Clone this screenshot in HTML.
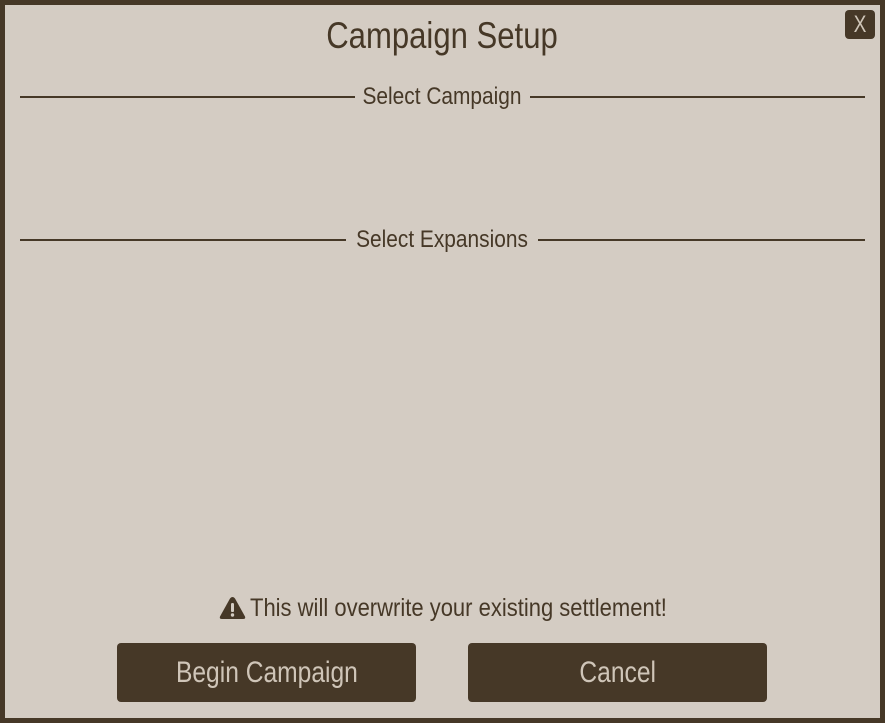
<!DOCTYPE html>
<html><head><style>
body{margin:0;width:885px;height:723px;overflow:hidden;background:#463827;font-family:"Liberation Sans",sans-serif;}
.p{position:absolute;left:5px;top:5px;width:875px;height:713px;background:#d4ccc3;}
.t{position:absolute;white-space:nowrap;color:#463827;transform-origin:center;}
.ln{position:absolute;height:2px;background:#463827;}
.btn{position:absolute;background:#463827;border-radius:4px;top:643px;height:59px;width:299px;color:#cfc5b8;text-align:center;line-height:60px;font-size:30px;}
.btn span{display:inline-block;transform:scaleX(0.82);}
</style></head><body>
<div class="p"></div>
<div class="t" style="left:242px;width:400px;text-align:center;top:15px;font-size:37px;transform:scaleX(0.84)">Campaign Setup</div>
<div style="position:absolute;left:845px;top:10px;width:30px;height:29px;background:#463827;border-radius:4px;color:#cfc5b8;font-size:24px;text-align:center;line-height:30px"><span style="display:inline-block;transform:scaleX(0.8)">X</span></div>
<div class="ln" style="left:20px;width:335px;top:96px"></div>
<div class="ln" style="left:530px;width:335px;top:96px"></div>
<div class="t" style="left:342px;width:200px;text-align:center;top:83px;font-size:24px;transform:scaleX(0.87)">Select Campaign</div>
<div class="ln" style="left:20px;width:326px;top:239px"></div>
<div class="ln" style="left:538px;width:327px;top:239px"></div>
<div class="t" style="left:322px;width:240px;text-align:center;top:226px;font-size:24px;transform:scaleX(0.87)">Select Expansions</div>
<svg style="position:absolute;left:219px;top:596px" width="27" height="24" viewBox="0 0 27 24"><path d="M13.5 1 Q15 1 16 2.5 L26 20.5 Q27 23 24 23 L3 23 Q0 23 1 20.5 L11 2.5 Q12 1 13.5 1Z" fill="#463827"/><rect x="12" y="7" width="3" height="9" rx="1.3" fill="#d4ccc3"/><circle cx="13.5" cy="19" r="1.7" fill="#d4ccc3"/></svg>
<div class="t" style="left:250px;top:594px;font-size:25px;transform-origin:left center;transform:scaleX(0.88)">This will overwrite your existing settlement!</div>
<div class="btn" style="left:117px"><span>Begin Campaign</span></div>
<div class="btn" style="left:468px"><span>Cancel</span></div>
</body></html>
